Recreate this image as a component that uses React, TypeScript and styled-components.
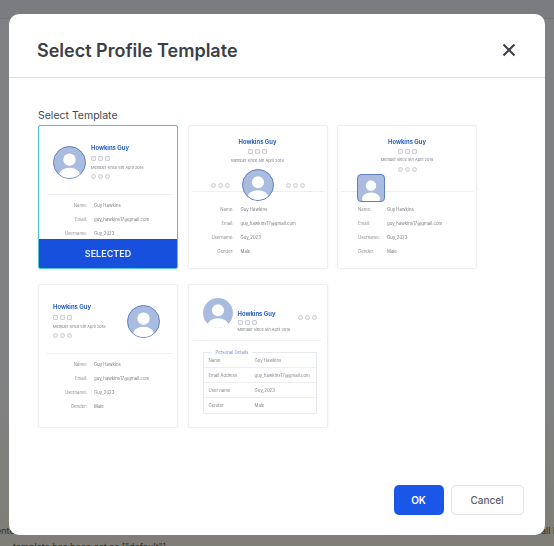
import { FC, Fragment } from 'react';
import styled, { createGlobalStyle } from 'styled-components';

const GlobalStyle = createGlobalStyle`
  html, body {
    margin: 0;
    padding: 0;
    height: 100%;
    overflow: hidden;
    background: #7f8082;
    font-family: 'Inter', 'Open Sans', sans-serif;
  }
`;

const Backdrop = styled.div`
  position: relative;
  width: 554px;
  height: 546px;
  overflow: hidden;
  background: linear-gradient(#808183 0%, #808182 70%, #7f7f78 96%);
`;

const PageBar = styled.div`
  height: 18px;
  background: #7b7c7f;
  border-bottom: 1px solid #747578;
`;

const BehindText = styled.p<{ $top: number; $left: number }>`
  position: absolute;
  left: ${(p) => p.$left}px;
  top: ${(p) => p.$top}px;
  margin: 0;
  white-space: nowrap;
  font-size: 9px;
  line-height: 12px;
  color: #2c2c28;
`;

const Modal = styled.div`
  position: absolute;
  left: 8.5px;
  top: 14px;
  width: 536.5px;
  height: 521px;
  display: flex;
  flex-direction: column;
  background: #fff;
  border-radius: 10px;
`;

const Header = styled.div`
  height: 64px;
  flex: none;
  display: flex;
  align-items: center;
  justify-content: space-between;
  box-sizing: border-box;
  padding: 9px 28px 0 28.5px;
  border-bottom: 1px solid #dcdee2;
`;

const Title = styled.h2`
  margin: 0;
  font-size: 18px;
  font-weight: 600;
  color: #3c3f46;
`;

const CloseButton = styled.button`
  width: 16px;
  height: 16px;
  padding: 0;
  border: 0;
  background: none;
  color: #3c3f46;
  display: block;
`;

const Body = styled.div`
  flex: 1;
  padding: 31px 29.5px 0;
`;

const FieldLabel = styled.div`
  font-size: 10.5px;
  line-height: 13px;
  color: #45484f;
  margin-bottom: 3px;
`;

const TemplateGrid = styled.div`
  display: grid;
  grid-template-columns: repeat(3, 140px);
  grid-auto-rows: 144px;
  column-gap: 9.5px;
  row-gap: 15px;
`;

const Card = styled.div<{ $selected?: boolean }>`
  position: relative;
  box-sizing: border-box;
  overflow: hidden;
  border: 1px solid ${(p) => (p.$selected ? '#4fc4d4' : '#eceef1')};
  border-radius: 2px;
  background: #fff;
  box-shadow: 0 0 3px rgba(40, 60, 110, 0.06);
  display: flex;
  flex-direction: column;
  filter: blur(0.25px);
`;

const SelectedBar = styled.div`
  position: absolute;
  left: 0;
  right: 0;
  bottom: 0;
  height: 29px;
  display: flex;
  align-items: center;
  justify-content: center;
  background: #1650dc;
  color: #eef3ff;
  font-size: 9px;
  font-weight: 600;
`;

const Name = styled.div`
  font-size: 5.9px;
  line-height: 8px;
  font-weight: 700;
  color: #2a62c0;
`;

const Since = styled.div`
  font-size: 3.9px;
  line-height: 6px;
  color: #7a7d83;
`;

const IconRow = styled.div`
  display: flex;
  gap: 2px;
  height: 6px;
  align-items: center;
`;

const Dot = styled.span<{ $square?: boolean }>`
  box-sizing: border-box;
  width: 5px;
  height: 5px;
  border: 0.8px solid #cdd0d5;
  border-radius: ${(p) => (p.$square ? '1px' : '50%')};
  background: #f1f2f4;
`;

const Circles: FC = () => (
  <IconRow>
    <Dot />
    <Dot />
    <Dot />
  </IconRow>
);

const Squares: FC = () => (
  <IconRow>
    <Dot $square />
    <Dot $square />
    <Dot $square />
  </IconRow>
);

const AvatarFrame = styled.div<{ $size: number; $square?: boolean; $plain?: boolean }>`
  flex: none;
  box-sizing: border-box;
  width: ${(p) => p.$size}px;
  height: ${(p) => p.$size}px;
  overflow: hidden;
  border-radius: ${(p) => (p.$square ? '4px' : '50%')};
  border: ${(p) => (p.$plain ? '0' : '1px solid #5f80c4')};
  background: #a9bcdf;
`;

const Avatar: FC<{ size: number; square?: boolean; plain?: boolean }> = ({
  size,
  square,
  plain,
}) => (
  <AvatarFrame $size={size} $square={square} $plain={plain}>
    <svg viewBox="0 0 32 32" width="100%" height="100%" style={{ display: 'block' }}>
      <circle cx="16" cy="13" r="6.4" fill="#fff" />
      <ellipse cx="16" cy="29" rx="11" ry="7.5" fill="#fff" />
    </svg>
  </AvatarFrame>
);

const Divider = styled.div`
  height: 1px;
  flex: none;
  background: #eceef0;
`;

const Rows = styled.div<{ $label: number; $align?: string }>`
  display: grid;
  grid-template-columns: ${(p) => p.$label}px 1fr;
  column-gap: 7px;
  grid-auto-rows: 14px;
  align-items: center;
  font-size: 4.3px;
  color: #7a7d83;
  & > span:nth-child(odd) {
    text-align: ${(p) => p.$align ?? 'right'};
    color: #8d9096;
  }
`;

const profileRows: [string, string][] = [
  ['Name:', 'Guy Hawkins'],
  ['Email:', 'guy_hawkins17@gmail.com'],
  ['Username:', 'Guy_2023'],
  ['Gender:', 'Male'],
];

const RowList: FC<{ label: number; align?: string; count?: number }> = ({
  label,
  align,
  count = 4,
}) => (
  <Rows $label={label} $align={align}>
    {profileRows.slice(0, count).map(([key, value]) => (
      <Fragment key={key}>
        <span>{key}</span>
        <span>{value}</span>
      </Fragment>
    ))}
  </Rows>
);

/* template 1 and 4: avatar beside the name */
const SideHead = styled.div<{ $reverse?: boolean }>`
  height: 68px;
  flex: none;
  box-sizing: border-box;
  display: flex;
  flex-direction: ${(p) => (p.$reverse ? 'row-reverse' : 'row')};
  justify-content: ${(p) => (p.$reverse ? 'space-between' : 'flex-start')};
  align-items: center;
  gap: 5px;
  padding: 4px 17px 0 14px;
`;

const SideText = styled.div`
  display: flex;
  flex-direction: column;
  gap: 3.2px;
`;

const SideDivider = styled(Divider)`
  margin: 0 5px 3.5px 8px;
`;

const SideRows = styled.div`
  padding-left: 7px;
`;

/* template 2 and 3: name centred over a rule */
const CenterHead = styled.div`
  height: 46px;
  flex: none;
  box-sizing: border-box;
  display: flex;
  flex-direction: column;
  align-items: center;
  gap: 2.8px;
  padding-top: 12px;
`;

const RuleBand = styled.div`
  position: relative;
  height: 30px;
  flex: none;
`;

const RuleLine = styled(Divider)`
  position: absolute;
  left: 3px;
  right: 3px;
  bottom: 10px;
`;

const OverRule = styled.div<{ $top: number; $left?: number }>`
  position: absolute;
  top: ${(p) => p.$top}px;
  left: ${(p) => p.$left ?? 0}px;
  right: ${(p) => (p.$left !== undefined ? 'auto' : '0')};
  display: flex;
  justify-content: center;
  align-items: center;
  gap: 12px;
`;

const CenterRows = styled.div<{ $pad?: number }>`
  padding-left: ${(p) => p.$pad ?? 0}px;
`;

/* template 5: header with bordered detail table */
const WideHead = styled.div`
  height: 55px;
  flex: none;
  box-sizing: border-box;
  display: flex;
  align-items: center;
  gap: 5px;
  padding: 1px 10px 0 14px;
`;

const WideText = styled.div`
  flex: 1;
  display: flex;
  flex-direction: column;
  gap: 1.5px;
  padding-top: 16px;
`;

const WideIcons = styled.div`
  margin-top: 8px;
`;

const WideDivider = styled(Divider)`
  margin: 0 6px 0 3px;
`;

const DetailBox = styled.div`
  position: relative;
  margin: 11px 10px 0 14px;
  border: 1px solid #e6e9ee;
`;

const Legend = styled.span`
  position: absolute;
  left: 8px;
  top: -3px;
  padding: 0 4px;
  background: #fff;
  font-size: 4.3px;
  line-height: 5px;
  color: #7d8fc4;
`;

const DetailRow = styled.div`
  box-sizing: border-box;
  height: 15px;
  padding-left: 5px;
  display: grid;
  grid-template-columns: 46px 1fr;
  align-items: center;
  font-size: 4.3px;
  color: #85888e;
  border-bottom: 1px solid #eceef1;
  &:last-child {
    border-bottom: 0;
  }
`;

const Footer = styled.div`
  flex: none;
  box-sizing: border-box;
  height: 50px;
  padding: 0 21.5px 20px 0;
  display: flex;
  justify-content: flex-end;
  gap: 7px;
`;

const OkButton = styled.button`
  width: 50px;
  height: 30px;
  padding: 0;
  border: 0;
  border-radius: 5px;
  background: #1a56e8;
  color: #fff;
  font: 600 10px 'Inter', sans-serif;
`;

const CancelButton = styled.button`
  width: 73px;
  height: 30px;
  padding: 0;
  border: 1px solid #e2e4e8;
  border-radius: 5px;
  background: #fff;
  color: #5a5d63;
  font: 500 10px 'Inter', sans-serif;
`;

const App: FC = () => (
  <Backdrop>
    <GlobalStyle />
    <PageBar />
    <BehindText $top={525} $left={-4}>
      enter
    </BehindText>
    <BehindText $top={525} $left={541}>
      all b
    </BehindText>
    <BehindText $top={541} $left={13}>
      {'template has been set as ["default"]'}
    </BehindText>
    <Modal>
      <Header>
        <Title>Select Profile Template</Title>
        <CloseButton aria-label="Close">
          <svg viewBox="0 0 16 16" width="16" height="16" fill="none">
            <path d="M2.5 2.5l11 11M13.5 2.5l-11 11" stroke="currentColor" strokeWidth="2" />
          </svg>
        </CloseButton>
      </Header>
      <Body>
        <FieldLabel>Select Template</FieldLabel>
        <TemplateGrid>
          <Card $selected>
            <SideHead>
              <Avatar size={33} />
              <SideText>
                <Name>Howkins Guy</Name>
                <Squares />
                <Since>Member since 5th April 2018</Since>
                <Circles />
              </SideText>
            </SideHead>
            <SideDivider />
            <SideRows>
              <RowList label={41} count={3} />
            </SideRows>
            <SelectedBar>SELECTED</SelectedBar>
          </Card>
          <Card>
            <CenterHead>
              <Name>Howkins Guy</Name>
              <Squares />
              <Since>Member since 5th April 2018</Since>
            </CenterHead>
            <RuleBand>
              <RuleLine />
              <OverRule $top={-3}>
                <Circles />
                <Avatar size={32} />
                <Circles />
              </OverRule>
            </RuleBand>
            <CenterRows $pad={5}>
              <RowList label={40} />
            </CenterRows>
          </Card>
          <Card>
            <CenterHead>
              <Name>Howkins Guy</Name>
              <Squares />
              <Since>Member since 5th April 2018</Since>
              <Circles />
            </CenterHead>
            <RuleBand>
              <RuleLine />
              <OverRule $top={2} $left={19}>
                <Avatar size={28} square />
              </OverRule>
            </RuleBand>
            <CenterRows $pad={20}>
              <RowList label={22} align="left" />
            </CenterRows>
          </Card>
          <Card>
            <SideHead $reverse>
              <Avatar size={33} />
              <SideText>
                <Name>Howkins Guy</Name>
                <Squares />
                <Since>Member since 5th April 2018</Since>
                <Circles />
              </SideText>
            </SideHead>
            <SideDivider />
            <SideRows>
              <RowList label={41} />
            </SideRows>
          </Card>
          <Card>
            <WideHead>
              <Avatar size={30} plain />
              <WideText>
                <Name>Howkins Guy</Name>
                <Squares />
                <Since>Member since 5th April 2018</Since>
              </WideText>
              <WideIcons>
                <Circles />
              </WideIcons>
            </WideHead>
            <WideDivider />
            <DetailBox>
              <Legend>Personal Details</Legend>
              <DetailRow>
                <span>Name</span>
                <span>Guy Hawkins</span>
              </DetailRow>
              <DetailRow>
                <span>Email Address</span>
                <span>guy_hawkins17@gmail.com</span>
              </DetailRow>
              <DetailRow>
                <span>User name</span>
                <span>Guy_2023</span>
              </DetailRow>
              <DetailRow>
                <span>Gender</span>
                <span>Male</span>
              </DetailRow>
            </DetailBox>
          </Card>
        </TemplateGrid>
      </Body>
      <Footer>
        <OkButton>OK</OkButton>
        <CancelButton>Cancel</CancelButton>
      </Footer>
    </Modal>
  </Backdrop>
);

export default App;
